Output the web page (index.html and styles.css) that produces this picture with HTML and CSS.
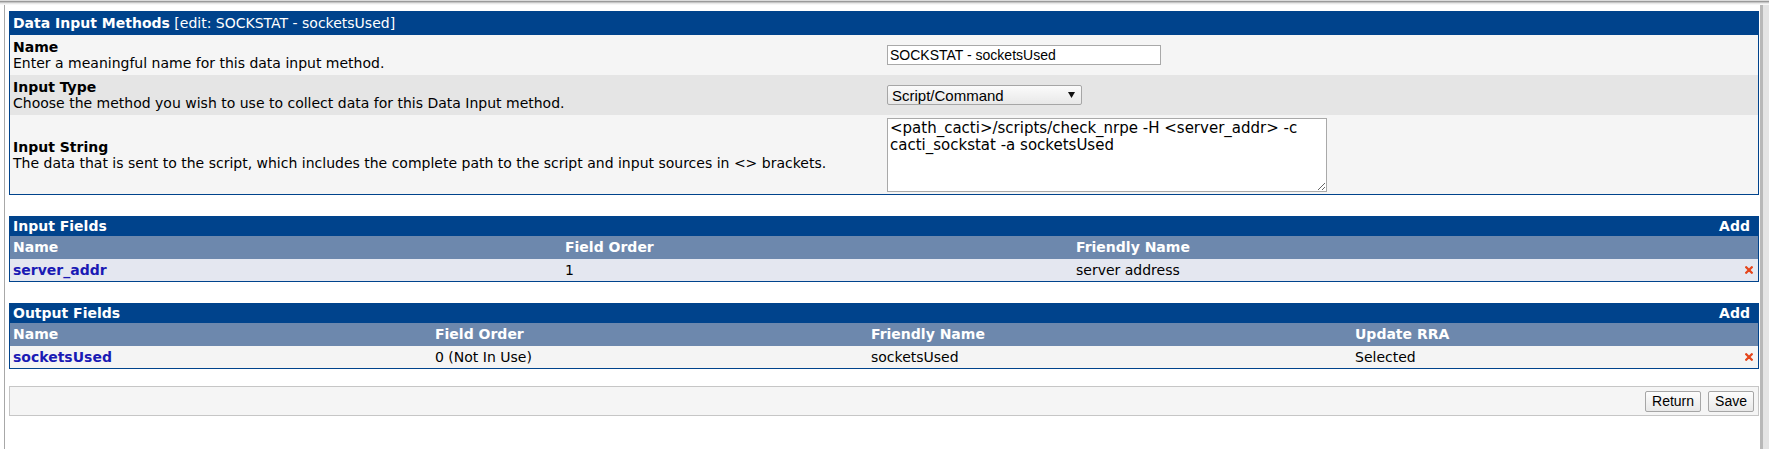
FILE: index.html
```html
<!DOCTYPE html>
<html>
<head>
<meta charset="utf-8">
<title>Data Input Methods</title>
<link rel="stylesheet" href="styles.css">
</head>
<body>
<div class="topedge"></div>
<div class="frame">
  <main class="page">
    <section class="panel">
      <div class="panel-head main-head"><span><b>Data Input Methods</b> [edit: SOCKSTAT - socketsUsed]</span></div>
      <div class="form-row light">
        <div class="label"><div class="title">Name</div><div class="desc">Enter a meaningful name for this data input method.</div></div>
        <div class="field"><input class="text" type="text" value="SOCKSTAT - socketsUsed"></div>
      </div>
      <div class="form-row dark">
        <div class="label"><div class="title">Input Type</div><div class="desc">Choose the method you wish to use to collect data for this Data Input method.</div></div>
        <div class="field">
          <div class="select"><span>Script/Command</span><svg class="arrow" width="7" height="6" viewBox="0 0 7 6"><path d="M0 0H7L3.5 6Z" fill="#111"/></svg></div>
        </div>
      </div>
      <div class="form-row light tall">
        <div class="label"><div class="title">Input String</div><div class="desc">The data that is sent to the script, which includes the complete path to the script and input sources in &lt;&gt; brackets.</div></div>
        <div class="field top"><textarea class="area">&lt;path_cacti&gt;/scripts/check_nrpe -H &lt;server_addr&gt; -c cacti_sockstat -a socketsUsed</textarea></div>
      </div>
    </section>

    <section class="panel">
      <div class="panel-head"><span><b>Input Fields</b></span><b>Add</b></div>
      <div class="grid in-grid colhead">
        <div class="cell">Name</div><div class="cell">Field Order</div><div class="cell">Friendly Name</div><div class="cell"></div>
      </div>
      <div class="grid in-grid datarow blueish">
        <div class="cell"><a class="link" href="#">server_addr</a></div>
        <div class="cell">1</div>
        <div class="cell">server address</div>
        <div class="cell icon"><svg width="8" height="8" viewBox="0 0 8 8"><path d="M1.2 1.2L6.8 6.8M6.8 1.2L1.2 6.8" stroke="#e5461c" stroke-width="2.3" stroke-linecap="round"/></svg></div>
      </div>
    </section>

    <section class="panel">
      <div class="panel-head"><span><b>Output Fields</b></span><b>Add</b></div>
      <div class="grid out-grid colhead">
        <div class="cell">Name</div><div class="cell">Field Order</div><div class="cell">Friendly Name</div><div class="cell">Update RRA</div><div class="cell"></div>
      </div>
      <div class="grid out-grid datarow greyish">
        <div class="cell"><a class="link" href="#">socketsUsed</a></div>
        <div class="cell">0 (Not In Use)</div>
        <div class="cell">socketsUsed</div>
        <div class="cell">Selected</div>
        <div class="cell icon"><svg width="8" height="8" viewBox="0 0 8 8"><path d="M1.2 1.2L6.8 6.8M6.8 1.2L1.2 6.8" stroke="#e5461c" stroke-width="2.3" stroke-linecap="round"/></svg></div>
      </div>
    </section>

    <section class="actions">
      <button class="btn" type="button">Return</button>
      <button class="btn" type="button">Save</button>
    </section>
  </main>
  <div class="rail"></div>
</div>
</body>
</html>
```

FILE: styles.css
```css
* { box-sizing: border-box; }

html, body {
  margin: 0;
  padding: 0;
  background: #fff;
}

body {
  font-family: "DejaVu Sans", Verdana, sans-serif;
  font-size: 14px;
  color: #000;
  height: 449px;
  overflow: hidden;
}

.topedge {
  height: 5px;
  background: linear-gradient(#dcdcdc 0, #dcdcdc 1px, #9a9a9a 1px, #9a9a9a 2px, #c6c6c6 2px, #c6c6c6 3px, #e8e8e8 3px, #e8e8e8 4px, #f7f7f7 4px);
}

.frame {
  display: flex;
  height: 444px;
}

.page {
  flex: 1;
  margin-left: 4px;
  border-left: 1px solid #a8a8a8;
  padding: 6px 1px 0 4px;
  display: flex;
  flex-direction: column;
  gap: 21px;
}

.rail {
  width: 9px;
  border-left: 3px solid #b8b8b8;
  background: #e4e4e4;
}

.panel {
  border: 1px solid #00438c;
}

.panel-head {
  background: #00438c;
  color: #fff;
  height: 19px;
  line-height: 19px;
  padding: 0 8px 0 3px;
  display: flex;
  justify-content: space-between;
}

.panel-head.main-head {
  height: 23px;
  line-height: 23px;
}

.form-row {
  display: grid;
  grid-template-columns: 50% 50%;
  min-height: 40px;
}

.form-row.light { background: #f5f5f5; }
.form-row.dark { background: #e5e5e5; }
.form-row.tall { min-height: 79px; }

.label {
  padding: 4px 3px;
  line-height: 16px;
  align-self: center;
}

.title { font-weight: bold; }

.field {
  display: flex;
  align-items: center;
  padding-left: 3px;
}

.field.top {
  align-items: flex-start;
  padding-top: 3px;
}

.text {
  width: 274px;
  height: 20px;
  border: 1px solid #a9a9a9;
  padding: 0 2px;
  font-family: "Liberation Sans", Arial, sans-serif;
  font-size: 14px;
  color: #000;
  background: #fff;
}

.select {
  width: 195px;
  height: 20px;
  border: 1px solid #a6a6a6;
  border-radius: 2px;
  background: linear-gradient(#fbfbfb, #e8e8e8);
  display: flex;
  align-items: center;
  justify-content: space-between;
  padding: 0 6px 0 4px;
  font-family: "Liberation Sans", Arial, sans-serif;
  font-size: 15px;
}

.area {
  width: 440px;
  height: 74px;
  border: 1px solid #a9a9a9;
  padding: 1px 2px;
  margin: 0;
  font-family: "DejaVu Sans", Verdana, sans-serif;
  font-size: 15px;
  line-height: 17px;
  color: #000;
  background: #fff;
}

.grid {
  display: grid;
}

.colhead {
  height: 23px;
  line-height: 23px;
}

.datarow {
  height: 22px;
  line-height: 22px;
}

.in-grid { grid-template-columns: 552px 511px 1fr 20px; }
.out-grid { grid-template-columns: 422px 436px 484px 1fr 20px; }

.cell {
  padding: 0 3px;
  white-space: nowrap;
}

.colhead {
  background: #6d88ad;
  color: #fff;
  font-weight: bold;
}

.datarow.blueish { background: #e4e7f0; }
.datarow.greyish { background: #f4f4f4; }

.link {
  color: #1a1ab4;
  font-weight: bold;
  text-decoration: none;
}

.icon {
  display: flex;
  align-items: center;
  justify-content: flex-end;
  padding: 0 5px 0 0;
}

.actions {
  margin-top: -4px;
  height: 30px;
  border: 1px solid #c6c6c6;
  background: #f5f5f5;
  display: flex;
  justify-content: flex-end;
  align-items: center;
  gap: 7px;
  padding-right: 4px;
}

.btn {
  height: 21px;
  padding: 0 6px;
  border: 1px solid #a6a6a6;
  border-radius: 2px;
  background: linear-gradient(#fdfdfd, #e8e8e8);
  font-family: "Liberation Sans", Arial, sans-serif;
  font-size: 14px;
  color: #000;
}
```
